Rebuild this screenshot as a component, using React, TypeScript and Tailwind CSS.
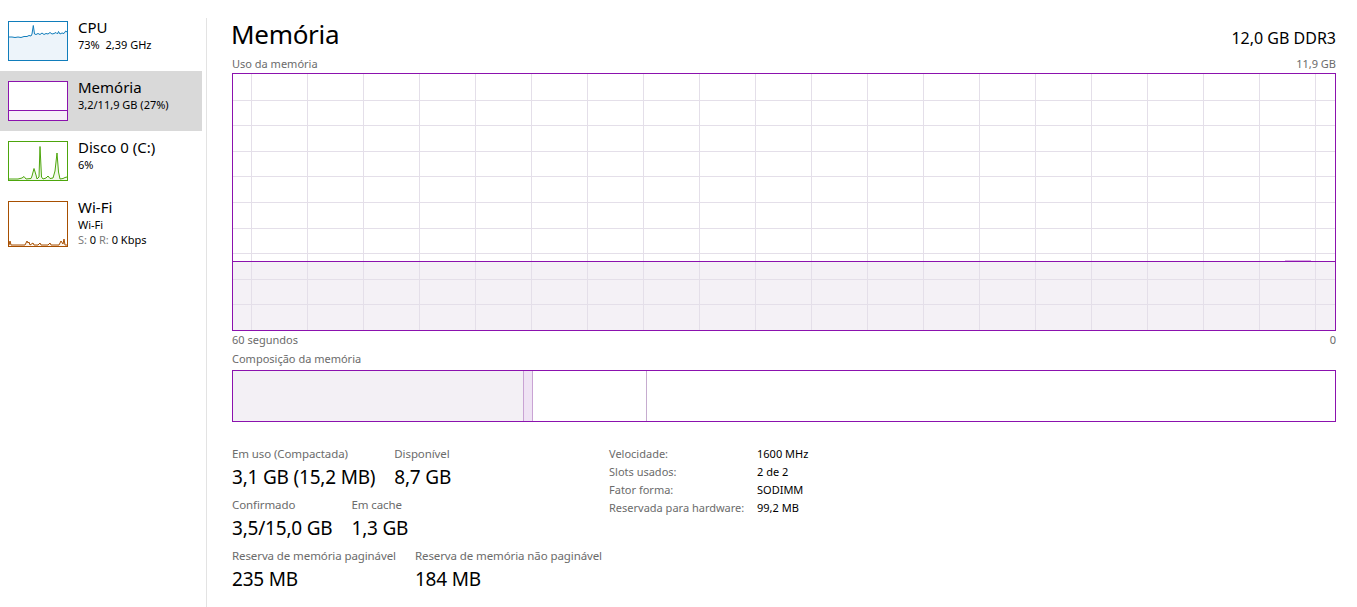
import React from "react";

type Pt = [number, number];

type SideItem = {
  name: string;
  lines: React.ReactNode[];
  stroke: string;
  fill: string;
  points: Pt[];
  h: number;
  selected?: boolean;
};

const cpuPoints: Pt[] = [
  [1, 16], [4, 16], [7, 16.5], [10, 16], [13, 16.5], [16, 15.5], [19, 15.5], [21, 14.5],
  [23, 15], [24, 13], [25.3, 4.5], [26.5, 13], [28, 13.5], [30, 12.5], [32, 13.5], [34, 12],
  [36, 13.5], [38, 12.5], [40, 13], [42, 11.5], [44, 13], [46, 12.5], [48, 11.5], [49.5, 13],
  [50.5, 10.5], [52, 13], [54, 12], [56, 12.5], [57.7, 10], [59, 11],
];

const memPoints: Pt[] = [[1, 29.5], [59, 29.5]];

const diskPoints: Pt[] = [
  [1, 38], [10, 38], [14, 37], [16, 35.5], [18, 38], [23, 37.5], [24, 35], [26, 27.5],
  [28, 34], [29, 38], [31, 36], [32, 5.5], [33.5, 36], [35, 38], [38, 37], [40, 35], [42, 37.5],
  [45, 37], [47, 30], [49, 12], [50.5, 31], [52, 38], [55, 37.5], [57, 36.5], [59, 36],
];

const wifiPoints: Pt[] = [
  [1, 44], [2, 40], [3, 44], [17, 44], [19, 40], [20, 42], [21, 41], [22, 44], [25, 42],
  [26, 44], [30, 44], [32, 42], [33, 44], [40, 44], [42, 42], [43, 44], [51, 44], [53, 40],
  [55, 43], [56, 38], [57, 44], [59, 44],
];

const items: SideItem[] = [
  {
    name: "CPU",
    lines: ["73%  2,39 GHz"],
    stroke: "#117dbb",
    fill: "#edf4fa",
    points: cpuPoints,
    h: 40,
  },
  {
    name: "Memória",
    lines: ["3,2/11,9 GB (27%)"],
    stroke: "#8b12ae",
    fill: "#f6eff8",
    points: memPoints,
    h: 40,
    selected: true,
  },
  {
    name: "Disco 0 (C:)",
    lines: ["6%"],
    stroke: "#4da60c",
    fill: "#f1f8ea",
    points: diskPoints,
    h: 40,
  },
  {
    name: "Wi-Fi",
    lines: [
      "Wi-Fi",
      <>
        <span className="text-[#7a7a7a]">S:</span> 0 <span className="text-[#7a7a7a]">R:</span> 0 Kbps
      </>,
    ],
    stroke: "#a74f01",
    fill: "#fcf4ec",
    points: wifiPoints,
    h: 46,
  },
];

function Thumb({ item }: { item: SideItem }) {
  const line = item.points.map((p) => p.join(",")).join(" ");
  const first = item.points[0];
  const last = item.points[item.points.length - 1];
  const area = `${first[0]},${item.h - 1} ${line} ${last[0]},${item.h - 1}`;
  return (
    <svg width={60} height={item.h} className="shrink-0 bg-white">
      <polygon points={area} fill={item.fill} />
      <polyline points={line} fill="none" stroke={item.stroke} strokeWidth={1} />
      <rect x={0.5} y={0.5} width={59} height={item.h - 1} fill="none" stroke={item.stroke} />
    </svg>
  );
}

function UsageGraph() {
  const w = 1102;
  const h = 256;
  const vLines = Array.from({ length: 20 }, (_, k) => 18.5 + 56 * k);
  const hLines = Array.from({ length: 9 }, (_, k) => Math.round(25.6 * (k + 1)) + 0.5);
  return (
    <div className="mt-[1px] h-[258px] border border-[#8b12ae] bg-white">
      <svg width={w} height={h} className="block">
        <rect x={0} y={187.5} width={w} height={h - 187.5} fill="#f4f1f6" />
        {vLines.map((x) => (
          <line key={x} x1={x} x2={x} y1={0} y2={h} stroke="#e4dfe9" />
        ))}
        {hLines.map((y) => (
          <line key={y} x1={0} x2={w} y1={y} y2={y} stroke="#e4dfe9" />
        ))}
        <line x1={0} x2={w} y1={187.5} y2={187.5} stroke="#8b12ae" />
        <line x1={1052} x2={1078} y1={186.5} y2={186.5} stroke="#c98ad9" opacity={0.7} />
      </svg>
    </div>
  );
}

function Stat({ label, value }: { label: string; value: string }) {
  return (
    <div className="shrink-0 whitespace-nowrap">
      <div className="text-[11.5px] leading-[16px] tracking-[-0.1px] text-[#6b6b6b]">{label}</div>
      <div className="mt-[3px] text-[19px] leading-[24px] tracking-[-0.2px] text-black">{value}</div>
    </div>
  );
}

const specs = [
  ["Velocidade:", "1600 MHz"],
  ["Slots usados:", "2 de 2"],
  ["Fator forma:", "SODIMM"],
  ["Reservada para hardware:", "99,2 MB"],
];

export default function App() {
  return (
    <div className="flex h-[607px] w-full overflow-hidden bg-white font-['Segoe_UI','Noto_Sans',sans-serif] text-black">
      {/* Sidebar */}
      <aside className="w-[206px] shrink-0 pt-[11px]">
        {items.map((item) => (
          <div
            key={item.name}
            className={`flex h-[60px] w-[202px] items-start pl-[8px] ${
              item.selected ? "bg-[#d9d9d9]" : ""
            }`}
          >
            <div className="mt-[10px]">
              <Thumb item={item} />
            </div>
            <div className="ml-[10px] mt-[7px]">
              <div className="text-[15px] leading-[18px]">{item.name}</div>
              <div className="mt-[1px] text-[11px] leading-[15px] whitespace-pre">
                {item.lines.map((l, i) => (
                  <div key={i}>{l}</div>
                ))}
              </div>
            </div>
          </div>
        ))}
      </aside>

      <div className="mt-[18px] w-px shrink-0 bg-[#e3e3e3]" />

      {/* Main */}
      <main className="flex-1 pl-[25px] pr-[21px] pt-[18px]">
        <div className="flex h-[32px] items-baseline justify-between">
          <h1 className="-ml-[1px] text-[26px] leading-[32px] tracking-[-0.3px]">Memória</h1>
          <span className="text-[16px] leading-[32px]">12,0 GB DDR3</span>
        </div>

        <div className="mt-[5px] flex h-[17px] justify-between text-[11px] leading-[17px] text-[#6b6b6b]">
          <span>Uso da memória</span>
          <span>11,9 GB</span>
        </div>
        <UsageGraph />
        <div className="mt-[1px] flex h-[16px] justify-between text-[11px] leading-[16px] text-[#6b6b6b]">
          <span>60 segundos</span>
          <span>0</span>
        </div>

        <div className="mt-[3px] text-[11px] leading-[16px] text-[#6b6b6b]">Composição da memória</div>
        <div className="mt-[3px] flex h-[52px] border border-[#8b12ae]">
          <div className="w-[291px] border-r border-[#c9a3d4] bg-[#f3f0f5]" />
          <div className="w-[9px] border-r border-[#c9a3d4] bg-[#efe3f4]" />
          <div className="w-[114px] border-r border-[#c6accf] bg-white" />
          <div className="flex-1 bg-white" />
        </div>

        <div className="mt-[24px] flex items-start">
          <div className="w-[377px] shrink-0">
            <div className="flex gap-[19px]">
              <Stat label="Em uso (Compactada)" value="3,1 GB (15,2 MB)" />
              <Stat label="Disponível" value="8,7 GB" />
            </div>
            <div className="mt-[8px] flex gap-[19px]">
              <Stat label="Confirmado" value="3,5/15,0 GB" />
              <Stat label="Em cache" value="1,3 GB" />
            </div>
            <div className="mt-[8px] flex gap-[19px]">
              <Stat label="Reserva de memória paginável" value="235 MB" />
              <Stat label="Reserva de memória não paginável" value="184 MB" />
            </div>
          </div>
          <div className="-mt-[1px] grid grid-cols-[148px_auto] content-start text-[11px] leading-[18px]">
            {specs.map(([k, v]) => (
              <React.Fragment key={k}>
                <span className="text-[#6b6b6b]">{k}</span>
                <span className="text-black">{v}</span>
              </React.Fragment>
            ))}
          </div>
        </div>
      </main>
    </div>
  );
}
